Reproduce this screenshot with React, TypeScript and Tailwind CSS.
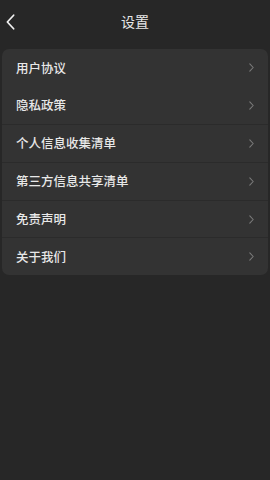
import React from 'react';

const items = ['用户协议', '隐私政策', '个人信息收集清单', '第三方信息共享清单', '免责声明', '关于我们'];

export default function App() {
    return (
        <div
            className="w-[270px] h-[480px] bg-[#272727] text-[#e8e8e8] overflow-hidden"
            style={{ fontFamily: '"Noto Sans CJK SC", "Noto Sans", sans-serif' }}
        >
            <div className="relative h-[49px] flex items-center justify-center">
                <button className="absolute left-[4px] top-[13px] w-[12px] h-[17px] flex items-center justify-center">
                    <svg className="w-[9px] h-[16px]" viewBox="0 0 10 17" fill="none" stroke="#f2f2f2" strokeWidth={1.9} strokeLinecap="round" strokeLinejoin="round">
                        <path d="M8.5 1L1.5 8.5L8.5 16" />
                    </svg>
                </button>
                <span className="text-[14px] mb-[6px]">设置</span>
            </div>
            <div className="mx-[2px] rounded-[7px] bg-[#333333] overflow-hidden">
                {items.map((t, i) => (
                    <div
                        key={t}
                        className={`h-[37.7px] flex items-center justify-between pl-[14px] pr-[14px] ${i > 1 ? 'border-t border-[#2b2b2b]' : ''}`}
                    >
                        <span className="text-[12.5px] leading-none font-medium">{t}</span>
                        <svg className="w-[5px] h-[9px]" viewBox="0 0 5 9" fill="none" stroke="#7a7a7a" strokeWidth={1.1} strokeLinecap="round" strokeLinejoin="round">
                            <path d="M0.8 0.8L4.2 4.5L0.8 8.2" />
                        </svg>
                    </div>
                ))}
            </div>
        </div>
    );
}
